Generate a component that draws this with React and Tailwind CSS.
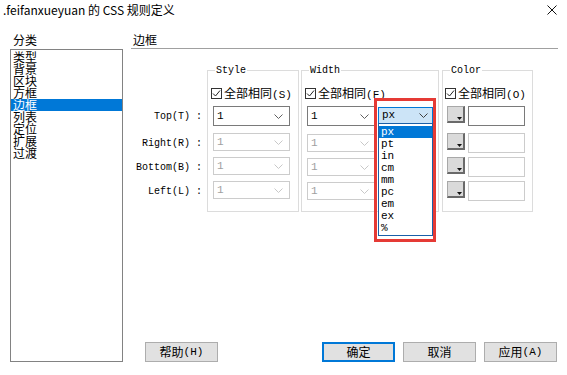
const mono = "font-['Liberation_Mono','Noto_Sans_CJK_SC',monospace]";
const cjk = "font-['Noto_Sans_CJK_SC','Liberation_Sans',sans-serif]";

/* =====================
   SMALL PARTS
===================== */
const Chevron = ({ color = "#606060" }) => (
  <svg width="9" height="5" viewBox="0 0 9 5">
    <polyline points="0.5,0.5 4.5,4.5 8.5,0.5" fill="none" stroke={color} strokeWidth="1" />
  </svg>
);

const Select = ({ value = "1", disabled, className = "" }) => (
  <div
    className={`flex items-center justify-between bg-white border pl-[3px] pr-[6px] ${
      disabled ? "border-[#cccccc] text-[#a0a0a0]" : "border-[#7a7a7a] text-black"
    } ${className}`}
  >
    <span className={`${mono} text-[11px] leading-none`}>{value}</span>
    <Chevron color={disabled ? "#c8c8c8" : "#606060"} />
  </div>
);

const Check = ({ k }) => (
  <div className="flex items-center h-[13px] -ml-[2px]">
    <div className="w-[11px] h-[11px] border border-[#333333] bg-white flex items-center justify-center">
      <svg width="9" height="9" viewBox="0 0 9 9">
        <polyline points="1,4.5 3.5,7 8,1.5" fill="none" stroke="#222" strokeWidth="1" />
      </svg>
    </div>
    <span className={`${cjk} text-[12px] leading-none ml-[2px] text-black`}>
      全部相同<span className={`${mono} text-[11px]`}>({k})</span>
    </span>
  </div>
);

/* grey colour-picker button with the little arrow */
const ColorBtn = () => (
  <div className="w-[18px] h-[17px] border-t border-l border-[#a8a8a8] border-b-2 border-r-2 border-b-[#6a6a6a] border-r-[#6a6a6a] bg-[#dadada] flex items-end justify-end pr-[1px] pb-[1px]">
    <svg width="5" height="3" viewBox="0 0 5 3">
      <polygon points="0,0 5,0 2.5,3" fill="#111" />
    </svg>
  </div>
);

const Group = ({ title, children, className = "" }) => (
  <div className={`relative border border-[#dcdcdc] pt-[16px] pb-[10px] ${className}`}>
    <span className={`absolute -top-[6px] left-[7px] bg-white px-[1px] ${mono} text-[10px] leading-[12px] text-black`}>
      {title}
    </span>
    {children}
  </div>
);

const Btn = ({ children, primary, className = "" }) => (
  <div
    className={`w-[73px] h-[20px] flex items-center justify-center bg-[#e1e1e1] text-[12px] leading-none text-black ${cjk} ${
      primary ? "border-2 border-[#0078d7]" : "border border-[#adadad]"
    } ${className}`}
  >
    {children}
  </div>
);

const categories = ["类型", "背景", "区块", "方框", "边框", "列表", "定位", "扩展", "过渡"];
const units = ["px", "pt", "in", "cm", "mm", "pc", "em", "ex", "%"];
const sides = ["Top(T)", "Right(R)", "Bottom(B)", "Left(L)"];

/* row wrappers shared by labels and groups */
const rowCls = ["h-[20px]", "h-[20px] mt-[7px]", "h-[20px] mt-[4px]", "h-[20px] mt-[4px]"];

export default function App() {
  return (
    <div className={`relative w-[567px] h-[375px] bg-white overflow-hidden ${cjk}`}>
      {/* =====================
          TITLE BAR
      ===================== */}
      <div className="h-[20px] flex items-center justify-between pl-[3px] pr-[10px]">
        <span className="text-[12px] text-black leading-none">.feifanxueyuan 的 CSS 规则定义</span>
        <svg width="10" height="10" viewBox="0 0 10 10">
          <path d="M0.5 0.5 L9.5 9.5 M9.5 0.5 L0.5 9.5" stroke="#111" strokeWidth="1" />
        </svg>
      </div>

      {/* =====================
          BODY
      ===================== */}
      <div className="flex pt-[14px] pl-[10px] h-[342px]">
        {/* category list */}
        <div className="w-[113px] flex flex-col">
          <div className="h-[15px] pl-[3px] text-[12px] leading-[12px] text-black">分类</div>
          <div className="h-[313px] border border-[#828282] pt-[1px]">
            {categories.map((c) => (
              <div
                key={c}
                className={`h-[12px] leading-[12px] text-[12px] pl-[2px] ${
                  c === "边框" ? "bg-[#0078d7] text-white" : "text-black"
                }`}
              >
                {c}
              </div>
            ))}
          </div>
        </div>

        {/* panel */}
        <div className="ml-[8px] w-[427px] flex flex-col">
          <div className="h-[15px] pl-[2px] text-[12px] leading-[12px] text-black border-b border-[#a0a0a0]">
            边框
          </div>

          <div className="flex items-start mt-[21px]">
            {/* side labels */}
            <div className="w-[76px] pt-[36px] pr-[5px]">
              {sides.map((s, i) => (
                <div key={s} className={`${rowCls[i]} flex items-center justify-end`}>
                  <span className={`${mono} text-[10px] text-black whitespace-pre`}>{s} :</span>
                </div>
              ))}
            </div>

            {/* Style */}
            <Group title="Style" className="w-[92px] pl-[5px]">
              <Check k="S" />
              <div className="mt-[6px]">
                {rowCls.map((r, i) => (
                  <div key={i} className={r}>
                    {i === 0 ? (
                      <Select className="w-[77px] h-[20px]" />
                    ) : (
                      <Select disabled className="w-[77px] h-[18px] mt-[1px]" />
                    )}
                  </div>
                ))}
              </div>
            </Group>

            {/* Width */}
            <Group title="Width" className="ml-[2px] w-[138px] pl-[5px]">
              <Check k="F" />
              <div className="mt-[6px]">
                {rowCls.map((r, i) => (
                  <div key={i} className={`${r} flex`}>
                    {i === 0 ? (
                      <>
                        <Select className="w-[69px] h-[20px]" />
                        <div className="relative ml-[2px] w-[55px] h-[17px] mt-[1px] z-10">
                          <div className="h-full flex items-center justify-between bg-[#cce4f7] border border-[#0078d7] pl-[3px] pr-[4px]">
                            <span className={`${mono} text-[11px] leading-none text-black`}>px</span>
                            <Chevron color="#404040" />
                          </div>
                          <div className="absolute top-[16px] left-0 w-full bg-white border border-[#1a5fa8] pt-[2px] pb-[1px]">
                            {units.map((u) => (
                              <div
                                key={u}
                                className={`h-[12px] leading-[12px] pl-[2px] ${mono} text-[11px] ${
                                  u === "px" ? "bg-[#0078d7] text-white" : "text-black"
                                }`}
                              >
                                {u}
                              </div>
                            ))}
                          </div>
                        </div>
                      </>
                    ) : (
                      <Select disabled className="w-[69px] h-[18px] mt-[1px]" />
                    )}
                  </div>
                ))}
              </div>
            </Group>

            {/* Color */}
            <Group title="Color" className="ml-[3px] w-[91px] pl-[4px]">
              <Check k="O" />
              <div className="mt-[6px]">
                {rowCls.map((r, i) => (
                  <div key={i} className={`${r} flex items-start`}>
                    <ColorBtn />
                    <div
                      className={`ml-[3px] w-[57px] h-[20px] bg-white border ${
                        i === 0 ? "border-[#7a7a7a]" : "border-[#cccccc]"
                      }`}
                    />
                  </div>
                ))}
              </div>
            </Group>
          </div>

          {/* buttons */}
          <div className="mt-auto flex items-end pr-[1px]">
            <Btn className="ml-[14px]">
              帮助<span className={`${mono} text-[11px]`}>(H)</span>
            </Btn>
            <div className="flex-1" />
            <Btn primary>确定</Btn>
            <Btn className="ml-[8px]">取消</Btn>
            <Btn className="ml-[8px]">
              应用<span className={`${mono} text-[11px]`}>(A)</span>
            </Btn>
          </div>
        </div>
      </div>

      {/* annotation frame */}
      <div className="absolute left-[374px] top-[98px] w-[62px] h-[144px] border-[3px] border-[#e53a35] z-20 pointer-events-none" />
    </div>
  );
}
